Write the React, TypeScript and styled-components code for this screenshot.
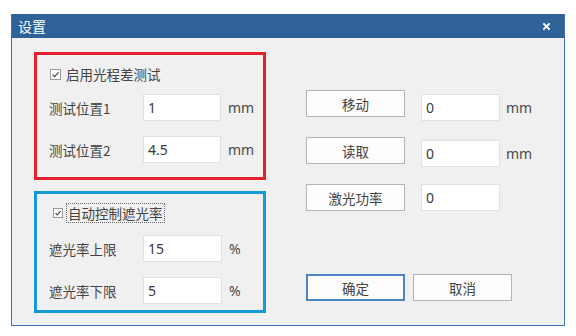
import React from "react";
import styled, { createGlobalStyle } from "styled-components";

const Global = createGlobalStyle`
  html, body { margin: 0; padding: 0; background: #ffffff; }
  body { font-family: "Noto Sans CJK SC", "Noto Sans", sans-serif; }
`;

const Page = styled.div`
  width: 576px;
  height: 336px;
  padding: 14px 0 0 11px;
  box-sizing: border-box;
`;

const Window = styled.div`
  width: 554px;
  height: 312px;
  display: flex;
  flex-direction: column;
  box-sizing: border-box;
  border: 1px solid #3a72b4;
  border-top: none;
  background: #f0f0f0;
`;

const TitleBar = styled.div`
  height: 24px;
  background: #2f6398;
  display: flex;
  align-items: center;
  justify-content: space-between;
  padding: 0 13px 0 6px;
  color: #ffffff;
  font-size: 14px;
  flex-shrink: 0;
`;

const Close = styled.svg`
  width: 9px;
  height: 9px;
`;

const Body = styled.div`
  flex: 1;
  display: flex;
  padding: 14px 0 0 22px;
  color: #444444;
  font-size: 13.5px;
`;

const LeftCol = styled.div`
  display: flex;
  flex-direction: column;
  gap: 11px;
  width: 232px;
`;

const GroupBox = styled.div<{ $color: string; $h: number; $pad: string }>`
  border: 3px solid ${(p) => p.$color};
  height: ${(p) => p.$h}px;
  box-sizing: border-box;
  padding: ${(p) => p.$pad};
  display: flex;
  flex-direction: column;
`;

const CheckRow = styled.div<{ $mb: number; $ml: number }>`
  display: flex;
  align-items: center;
  height: 20px;
  margin-left: ${(p) => p.$ml}px;
  margin-bottom: ${(p) => p.$mb}px;
`;

const Box = styled.span<{ $size: number }>`
  width: ${(p) => p.$size}px;
  height: ${(p) => p.$size}px;
  border: 1px solid #9a9a9a;
  background: #ffffff;
  box-sizing: border-box;
  display: inline-flex;
  align-items: center;
  justify-content: center;
  margin-right: 3px;
`;

const CheckLabel = styled.span<{ $focus?: boolean }>`
  line-height: 18px;
  padding: 0 1px;
  border: 1px dotted ${(p) => (p.$focus ? "#6a6a6a" : "transparent")};
`;

const FieldRow = styled.div<{ $mb: number }>`
  display: flex;
  align-items: center;
  height: 27px;
  margin-bottom: ${(p) => p.$mb}px;
`;

const Label = styled.span`
  width: 94px;
  flex-shrink: 0;
`;

const Input = styled.div<{ $w?: number }>`
  width: ${(p) => p.$w ?? 78}px;
  height: 27px;
  box-sizing: border-box;
  background: #ffffff;
  border: 1px solid #e1e1e1;
  display: flex;
  align-items: center;
  padding-left: 4px;
  font-family: "Noto Sans", sans-serif;
  font-size: 14px;
  color: #3a3a3a;
`;

const Unit = styled.span`
  margin-left: 7px;
  font-family: "Noto Sans", sans-serif;
  font-size: 14px;
  color: #4a4a4a;
`;

const RightCol = styled.div`
  margin-left: 40px;
  margin-top: 38px;
  display: flex;
  flex-direction: column;
  flex: 1;
`;

const ActionRow = styled.div<{ $mb: number }>`
  display: flex;
  align-items: flex-start;
  margin-bottom: ${(p) => p.$mb}px;
`;

const Button = styled.div<{ $primary?: boolean; $w?: number }>`
  width: ${(p) => p.$w ?? 99}px;
  height: 27px;
  box-sizing: border-box;
  background: #fdfdfd;
  border: ${(p) => (p.$primary ? "2px solid #4a86c4" : "1px solid #b4b4b4")};
  display: flex;
  align-items: center;
  justify-content: center;
  font-size: 13.5px;
  color: #444444;
`;

const SideInput = styled(Input)<{ $top: number }>`
  margin-left: 16px;
  margin-top: ${(p) => p.$top}px;
`;

const SideUnit = styled(Unit)`
  margin-left: 6px;
  align-self: flex-end;
  line-height: 27px;
`;

const Footer = styled.div`
  display: flex;
  gap: 8px;
  margin-top: auto;
  margin-bottom: 24px;
`;

const Check = ({ size }: { size: number }) => (
  <Box $size={size}>
    <svg width={size - 2} height={size - 2} viewBox="0 0 10 10">
      <path d="M1.8 5.2 L4 7.4 L8.4 2.6" fill="none" stroke="#444" strokeWidth="1.3" />
    </svg>
  </Box>
);

export default function App() {
  return (
    <Page>
      <Global />
      <Window>
        <TitleBar>
          <span>设置</span>
          <Close viewBox="0 0 10 10">
            <path d="M1.5 1.5 L8.5 8.5 M8.5 1.5 L1.5 8.5" stroke="#ffffff" strokeWidth="2.2" />
          </Close>
        </TitleBar>
        <Body>
          <LeftCol>
            <GroupBox $color="#e3202c" $h={128} $pad="9px 0 0 12px">
              <CheckRow $mb={10} $ml={1}>
                <Check size={11} />
                <CheckLabel>启用光程差测试</CheckLabel>
              </CheckRow>
              <FieldRow $mb={15}>
                <Label>测试位置1</Label>
                <Input>1</Input>
                <Unit>mm</Unit>
              </FieldRow>
              <FieldRow $mb={0}>
                <Label>测试位置2</Label>
                <Input>4.5</Input>
                <Unit>mm</Unit>
              </FieldRow>
            </GroupBox>
            <GroupBox $color="#159ad8" $h={122} $pad="9px 0 0 12px">
              <CheckRow $mb={12} $ml={4}>
                <Check size={10} />
                <CheckLabel $focus>自动控制遮光率</CheckLabel>
              </CheckRow>
              <FieldRow $mb={15}>
                <Label>遮光率上限</Label>
                <Input $w={79}>15</Input>
                <Unit>%</Unit>
              </FieldRow>
              <FieldRow $mb={0}>
                <Label>遮光率下限</Label>
                <Input $w={79}>5</Input>
                <Unit>%</Unit>
              </FieldRow>
            </GroupBox>
          </LeftCol>
          <RightCol>
            <ActionRow $mb={16}>
              <Button>移动</Button>
              <SideInput $top={4} $w={79}>0</SideInput>
              <SideUnit>mm</SideUnit>
            </ActionRow>
            <ActionRow $mb={17}>
              <Button>读取</Button>
              <SideInput $top={3} $w={79}>0</SideInput>
              <SideUnit>mm</SideUnit>
            </ActionRow>
            <ActionRow $mb={0}>
              <Button>激光功率</Button>
              <SideInput $top={0} $w={79}>0</SideInput>
            </ActionRow>
            <Footer>
              <Button $primary>确定</Button>
              <Button>取消</Button>
            </Footer>
          </RightCol>
        </Body>
      </Window>
    </Page>
  );
}
